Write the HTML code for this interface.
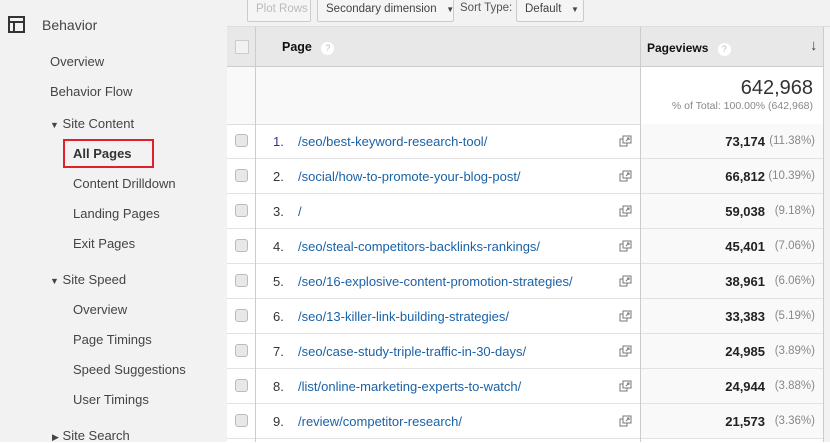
<!DOCTYPE html>
<html><head><style>
*{margin:0;padding:0;box-sizing:border-box}
body{width:830px;height:442px;overflow:hidden;background:#fff;font-family:"Liberation Sans",Arial,sans-serif;position:relative}
.sb{position:absolute;left:0;top:0;width:227px;height:442px;background:#f2f2f2}
.sb div{position:absolute;font-size:13px;color:#444;white-space:nowrap}
.main{position:absolute;left:227px;top:0;width:603px;height:442px;background:#fff}
.tb{position:absolute;left:0;top:0;width:603px;height:27px;background:#f2f2f2;border-bottom:1px solid #ddd}
.btn{position:absolute;top:-3px;height:25px;border:1px solid #ccc;border-radius:2px;background:#f5f5f5;font-size:11.5px;color:#444;padding:5px 8px;white-space:nowrap;line-height:13px}
.cb{position:absolute;left:8px;width:13px;height:13px;border:1px solid #bbb;border-radius:3px;background:#e8e8e8}
.row{position:absolute;left:0;width:603px;height:35px;border-bottom:1px solid #e2e2e2}
.row .n{position:absolute;left:46px;top:10px;font-size:13px;color:#333}
.row .u{position:absolute;left:71px;top:10px;font-size:13px;color:#1a62a8}
.row .pv{position:absolute;left:414px;width:182px;top:0;height:34px;background:#f9f9f9}
.row .v{position:absolute;right:58px;top:10px;font-size:13px;font-weight:bold;color:#222}
.row .p{position:absolute;right:8px;top:11px;font-size:11.5px;color:#888}
</style></head><body>
<div class="sb">
<svg style="position:absolute;left:8px;top:16px" width="17" height="17" viewBox="0 0 17 17"><rect x="1" y="1" width="15" height="15" fill="none" stroke="#333" stroke-width="2"/><line x1="1" y1="6" x2="16" y2="6" stroke="#333" stroke-width="2"/><line x1="6" y1="6" x2="6" y2="16" stroke="#333" stroke-width="2"/></svg>
<div style="left:42px;top:17px;font-size:14px">Behavior</div>
<div style="left:50px;top:54px">Overview</div>
<div style="left:50px;top:84px">Behavior Flow</div>
<div style="left:50px;top:116px"><span style="font-size:9px">▼</span> Site Content</div>
<div style="left:63px;top:139px;width:91px;height:29px;border:2px solid #e0202a"></div>
<div style="left:73px;top:146px;font-weight:bold;color:#333">All Pages</div>
<div style="left:73px;top:176px">Content Drilldown</div>
<div style="left:73px;top:206px">Landing Pages</div>
<div style="left:73px;top:236px">Exit Pages</div>
<div style="left:50px;top:272px"><span style="font-size:9px">▼</span> Site Speed</div>
<div style="left:73px;top:302px">Overview</div>
<div style="left:73px;top:332px">Page Timings</div>
<div style="left:73px;top:362px">Speed Suggestions</div>
<div style="left:73px;top:392px">User Timings</div>
<div style="left:52px;top:428px"><span style="font-size:9px">▶</span> Site Search</div>
</div>
<div class="main">
<div class="tb">
<div class="btn" style="left:20px;width:64px;color:#bbb">Plot Rows</div>
<div class="btn" style="left:90px;width:137px">Secondary dimension &nbsp;&nbsp;<span style="font-size:8px">▼</span></div>
<div style="position:absolute;left:233px;top:2px;font-size:11.5px;color:#555">Sort Type:</div>
<div class="btn" style="left:289px;width:68px">Default &nbsp;&nbsp;<span style="font-size:8px">▼</span></div>
</div>
<div style="position:absolute;left:0;top:27px;width:603px;height:40px;background:#e8e8e8;border-bottom:1px solid #ccc"></div>
<div style="position:absolute;left:0;top:67px;width:603px;height:58px;background:#f9f9f9;border-bottom:1px solid #ddd"></div>
<div style="position:absolute;left:414px;top:67px;width:182px;height:57px;background:#fff"></div>
<div class="cb" style="top:40px;width:14px;height:14px;border-radius:0;background:#f2f2f2;border-color:#ccc"></div>
<div style="position:absolute;left:55px;top:40px;font-size:12.5px;font-weight:bold;color:#111">Page <span style="display:inline-block;width:13px;height:13px;border-radius:50%;background:#fff;color:#bbb;font-size:9px;text-align:center;line-height:13px;margin-left:6px;font-weight:normal">?</span></div>
<div style="position:absolute;left:420px;top:41px;font-size:12px;font-weight:bold;color:#111">Pageviews <span style="display:inline-block;width:13px;height:13px;border-radius:50%;background:#fff;color:#bbb;font-size:9px;text-align:center;line-height:13px;margin-left:6px;font-weight:normal">?</span></div>
<div style="position:absolute;left:583px;top:37px;font-size:15px;color:#444">↓</div>
<div style="position:absolute;right:17px;top:77px;font-size:20px;color:#333">642,968</div>
<div style="position:absolute;right:17px;top:100px;font-size:10.5px;color:#888">% of Total: 100.00% (642,968)</div>
<div class="row" style="top:124px"><div class="cb" style="top:10px"></div><span class="n" style="color:#4a2a8a">1.</span><span class="u">/seo/best-keyword-research-tool/</span><div class="pv"><span class="v">73,174</span><span class="p">(11.38%)</span></div></div>
<div class="row" style="top:159px"><div class="cb" style="top:10px"></div><span class="n">2.</span><span class="u">/social/how-to-promote-your-blog-post/</span><div class="pv"><span class="v">66,812</span><span class="p">(10.39%)</span></div></div>
<div class="row" style="top:194px"><div class="cb" style="top:10px"></div><span class="n">3.</span><span class="u">/</span><div class="pv"><span class="v">59,038</span><span class="p">(9.18%)</span></div></div>
<div class="row" style="top:229px"><div class="cb" style="top:10px"></div><span class="n">4.</span><span class="u">/seo/steal-competitors-backlinks-rankings/</span><div class="pv"><span class="v">45,401</span><span class="p">(7.06%)</span></div></div>
<div class="row" style="top:264px"><div class="cb" style="top:10px"></div><span class="n">5.</span><span class="u">/seo/16-explosive-content-promotion-strategies/</span><div class="pv"><span class="v">38,961</span><span class="p">(6.06%)</span></div></div>
<div class="row" style="top:299px"><div class="cb" style="top:10px"></div><span class="n">6.</span><span class="u">/seo/13-killer-link-building-strategies/</span><div class="pv"><span class="v">33,383</span><span class="p">(5.19%)</span></div></div>
<div class="row" style="top:334px"><div class="cb" style="top:10px"></div><span class="n">7.</span><span class="u">/seo/case-study-triple-traffic-in-30-days/</span><div class="pv"><span class="v">24,985</span><span class="p">(3.89%)</span></div></div>
<div class="row" style="top:369px"><div class="cb" style="top:10px"></div><span class="n">8.</span><span class="u">/list/online-marketing-experts-to-watch/</span><div class="pv"><span class="v">24,944</span><span class="p">(3.88%)</span></div></div>
<div class="row" style="top:404px"><div class="cb" style="top:10px"></div><span class="n">9.</span><span class="u">/review/competitor-research/</span><div class="pv"><span class="v">21,573</span><span class="p">(3.36%)</span></div></div>
<svg style="position:absolute;left:392px;top:0" width="14" height="442">
<defs><g id="i"><rect x="1" y="4" width="7" height="7" fill="#fff" stroke="#777"/><rect x="4" y="1" width="8" height="7" fill="#fff" stroke="#777"/><path d="M7 6 L10 3 M8 3 H10 V5" stroke="#777" fill="none"/></g></defs>
<use href="#i" y="135"/><use href="#i" y="170"/><use href="#i" y="205"/><use href="#i" y="240"/><use href="#i" y="275"/><use href="#i" y="310"/><use href="#i" y="345"/><use href="#i" y="380"/><use href="#i" y="415"/>
</svg>
<div style="position:absolute;left:28px;top:27px;width:1px;height:415px;background:#ccc"></div>
<div style="position:absolute;left:413px;top:27px;width:1px;height:415px;background:#ccc"></div>
<div style="position:absolute;left:596px;top:27px;width:1px;height:415px;background:#ccc"></div>
<div style="position:absolute;left:597px;top:27px;width:6px;height:415px;background:#f2f2f2"></div>
</div>
</body></html>
